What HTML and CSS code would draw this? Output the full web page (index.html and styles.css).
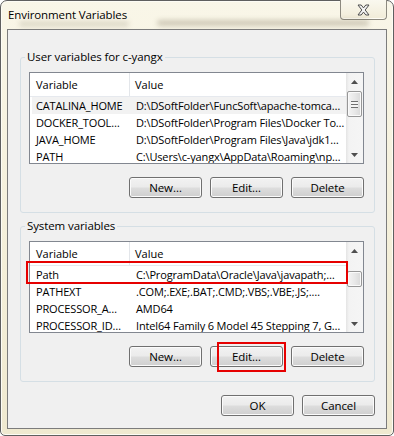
FILE: index.html
```html
<!DOCTYPE html>
<html>
<head>
<meta charset="utf-8">
<title>Environment Variables</title>
<link rel="stylesheet" href="styles.css">
</head>
<body>
<div class="window">
  <div class="titlebar">
    <div class="ghost ghost-left"></div>
    <div class="ghost ghost-right"></div>
    <span class="title">Environment Variables</span>
    <button class="close" aria-label="Close">
      <svg width="13" height="12" viewBox="0 0 13 12"><polygon points="1,1 4.2,1 6.5,3.9 8.8,1 12,1 8.2,6 12,11 8.8,11 6.5,8.1 4.2,11 1,11 4.8,6" fill="#f2f2f2" stroke="#4e4e4e" stroke-width="1" stroke-linejoin="round"/></svg>
    </button>
  </div>
  <div class="client">
    <fieldset class="group">
      <legend>User variables for c-yangx</legend>
      <div class="list">
        <div class="list-body">
          <div class="header"><span class="c1">Variable</span><span class="c2">Value</span></div>
          <div class="row hot"><span class="c1">CATALINA_HOME</span><span class="c2">D:\DSoftFolder\FuncSoft\apache-tomca…</span></div>
          <div class="row"><span class="c1">DOCKER_TOOL…</span><span class="c2">D:\DSoftFolder\Program Files\Docker To…</span></div>
          <div class="row"><span class="c1">JAVA_HOME</span><span class="c2">D:\DSoftFolder\Program Files\Java\jdk1…</span></div>
          <div class="row"><span class="c1">PATH</span><span class="c2">C:\Users\c-yangx\AppData\Roaming\np…</span></div>
        </div>
        <div class="scrollbar">
          <div class="arrow"><svg width="7" height="4" viewBox="0 0 7 4"><polygon points="0,4 3.5,0 7,4" fill="#4f4f4f"/></svg></div>
          <div class="thumb thumb-user"><span class="grip"></span></div>
          <div class="track"></div>
          <div class="arrow"><svg width="7" height="4" viewBox="0 0 7 4"><polygon points="0,0 7,0 3.5,4" fill="#4f4f4f"/></svg></div>
        </div>
      </div>
      <div class="buttons">
        <button class="btn">New…</button>
        <button class="btn">Edit…</button>
        <button class="btn">Delete</button>
      </div>
    </fieldset>

    <fieldset class="group group-system">
      <legend>System variables</legend>
      <div class="list">
        <div class="list-body">
          <div class="header"><span class="c1">Variable</span><span class="c2">Value</span></div>
          <div class="row"><span class="c1">Path</span><span class="c2">C:\ProgramData\Oracle\Java\javapath;…</span></div>
          <div class="row"><span class="c1">PATHEXT</span><span class="c2">.COM;.EXE;.BAT;.CMD;.VBS;.VBE;.JS;.…</span></div>
          <div class="row"><span class="c1">PROCESSOR_A…</span><span class="c2">AMD64</span></div>
          <div class="row"><span class="c1">PROCESSOR_ID…</span><span class="c2">Intel64 Family 6 Model 45 Stepping 7, G…</span></div>
        </div>
        <div class="scrollbar">
          <div class="arrow"><svg width="7" height="4" viewBox="0 0 7 4"><polygon points="0,4 3.5,0 7,4" fill="#4f4f4f"/></svg></div>
          <div class="thumb thumb-system"></div>
          <div class="track"></div>
          <div class="arrow"><svg width="7" height="4" viewBox="0 0 7 4"><polygon points="0,0 7,0 3.5,4" fill="#4f4f4f"/></svg></div>
        </div>
      </div>
      <div class="buttons">
        <button class="btn">New…</button>
        <button class="btn">Edit…</button>
        <button class="btn">Delete</button>
      </div>
    </fieldset>

    <div class="footer">
      <button class="btn">OK</button>
      <button class="btn">Cancel</button>
    </div>

    <div class="mark mark-path"></div>
    <div class="mark mark-edit"></div>
  </div>
</div>
</body>
</html>
```

FILE: styles.css
```css
* { box-sizing: border-box; }

html, body {
  margin: 0;
  padding: 0;
}

body {
  width: 394px;
  height: 436px;
  overflow: hidden;
  background: #ffffff;
  font-family: "Open Sans", "Noto Sans", sans-serif;
  font-size: 11px;
  color: #000;
}

.window {
  width: 394px;
  height: 436px;
  border: 1px solid #5f5f5f;
  border-radius: 7px 7px 5px 5px;
  background: linear-gradient(#f9f6e8, #f4efd9 60%, #efe9d0);
  padding: 0 6px 6px 6px;
  display: flex;
  flex-direction: column;
  box-shadow: inset 0 0 0 1px #fdfcf5;
}

.titlebar {
  height: 28px;
  flex: none;
  display: flex;
  align-items: flex-start;
  position: relative;
}

.ghost {
  position: absolute;
  height: 6px;
  border-radius: 3px;
  background: rgba(70, 55, 25, 0.22);
  filter: blur(2.5px);
}

.ghost-left {
  left: 12px;
  top: 20px;
  width: 110px;
  background: rgba(70, 55, 25, 0.14);
}

.ghost-right {
  left: 150px;
  top: 19px;
  width: 212px;
}

.title {
  position: relative;
  margin-left: 1px;
  margin-top: 6px;
  line-height: 16px;
  font-size: 11.5px;
  letter-spacing: -0.1px;
}

.close {
  margin-left: auto;
  margin-top: -1px;
  width: 47px;
  height: 20px;
  border: 1px solid #8d8a80;
  border-top: none;
  border-radius: 0 0 4px 4px;
  background: linear-gradient(#faf8ef, #f1ecd8);
  box-shadow: inset 0 -1px 0 #fffdf5;
  padding: 0;
  display: flex;
  align-items: center;
  justify-content: center;
}

.client {
  flex: 1;
  border: 1px solid #7c7c7c;
  background: #f0f0f0;
  padding: 19px 11px 0 12px;
  position: relative;
  display: flex;
  flex-direction: column;
}

.group {
  margin: 0;
  border: 1px solid #d5dfe5;
  border-radius: 3px;
  padding: 7px 10px 14px 8px;
  min-width: 0;
}

.group-system {
  margin-top: 5px;
}

.group legend {
  margin-left: -4px;
  padding: 0 2px;
  line-height: 16px;
  font-size: 11.5px;
  letter-spacing: -0.1px;
}

.list {
  height: 92px;
  border: 1px solid #828790;
  background: #ffffff;
  display: flex;
}

.list-body {
  flex: 1;
  min-width: 0;
  overflow: hidden;
}

.header {
  height: 24px;
  display: flex;
  border-bottom: 1px solid #e6e9ee;
}

.header span {
  display: flex;
  align-items: center;
  white-space: nowrap;
}

.header .c1 {
  width: 100px;
  padding-left: 6px;
  border-right: 1px solid #e3e6ea;
}

.header .c2 {
  flex: 1;
  padding-left: 5px;
}

.row {
  height: 17px;
  display: flex;
  align-items: center;
  white-space: nowrap;
  letter-spacing: -0.15px;
}

.row.hot {
  background: linear-gradient(to right, transparent 2px, #f2f2f2 2px);
}

.row .c1 {
  width: 100px;
  flex: none;
  padding-left: 6px;
  overflow: hidden;
}

.row .c2 {
  flex: 1;
  min-width: 0;
  padding-left: 6px;
  overflow: hidden;
}

.scrollbar {
  width: 17px;
  flex: none;
  display: flex;
  flex-direction: column;
  background: linear-gradient(to right, #e4e4e4, #f3f3f3 3px, #f5f5f5);
}

.arrow {
  height: 17px;
  flex: none;
  display: flex;
  align-items: center;
  justify-content: center;
}

.thumb {
  flex: none;
  margin: 0 1px;
  border: 1px solid #979797;
  border-radius: 2px;
  background: linear-gradient(to right, #f4f4f4, #e8e8e8 50%, #d9d9d9);
  box-shadow: inset 0 0 0 1px #fafafa;
  display: flex;
  align-items: center;
  justify-content: center;
}

.thumb-user {
  margin-top: 1px;
  height: 26px;
}

.thumb-system {
  margin-top: 12px;
  height: 16px;
}

.grip {
  width: 7px;
  height: 7px;
  background: repeating-linear-gradient(#6f6f6f 0 1px, #f4f4f4 1px 3px);
}

.track {
  flex: 1;
}

.buttons,
.footer {
  display: flex;
  justify-content: flex-end;
  gap: 8px;
  margin-top: 13px;
}

.btn {
  font: inherit;
  font-size: 11.5px;
  letter-spacing: -0.1px;
  width: 73px;
  height: 21px;
  padding: 0;
  color: #000;
  border: 1px solid #707070;
  border-radius: 3px;
  background: linear-gradient(#f2f2f2 0%, #ebebeb 48%, #dddddd 52%, #cfcfcf 100%);
  box-shadow: inset 0 0 0 1px #fbfbfb;
}

.mark {
  position: absolute;
  border: 2px solid #e60000;
  pointer-events: none;
}

.mark-path {
  left: 18px;
  top: 231px;
  width: 322px;
  height: 23px;
}

.mark-edit {
  left: 209px;
  top: 312px;
  width: 69px;
  height: 30px;
}
```
